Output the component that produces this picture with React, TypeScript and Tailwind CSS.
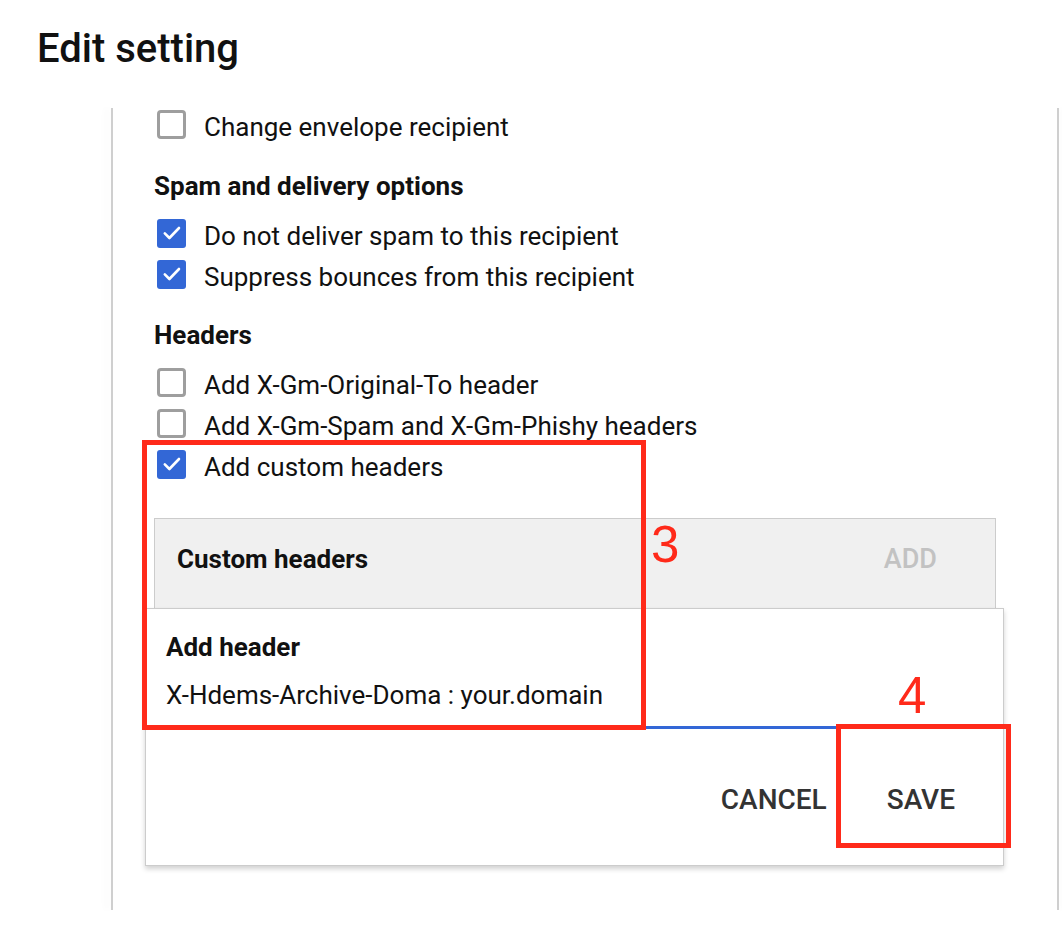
import React from "react";

function Box({ checked }: { checked: boolean }) {
  if (checked) {
    return (
      <div className="w-[29px] h-[29px] rounded-[3px] bg-[#3367d6] flex items-center justify-center shrink-0 mt-[-5px]">
        <svg width="24" height="24" viewBox="0 0 24 24" fill="none">
          <path d="M4.8 12.4l4.6 4.6 9.6-10" stroke="white" strokeWidth="2.6" strokeLinecap="round" strokeLinejoin="round" />
        </svg>
      </div>
    );
  }
  return <div className="w-[29px] h-[29px] rounded-[4px] border-[3px] border-[#9e9e9e] bg-white shrink-0 mt-[-5px]" />;
}

function Row({ checked, label }: { checked: boolean; label: string }) {
  return (
    <div className="h-[41px] flex items-center pl-[3px]">
      <Box checked={checked} />
      <span className="ml-[18px] text-[26px] leading-[30px] text-[#111]">{label}</span>
    </div>
  );
}

function Heading({ children, className }: { children: React.ReactNode; className: string }) {
  return <div className={"text-[26px] leading-[30px] font-bold text-[#111] " + className}>{children}</div>;
}

export default function App() {
  return (
    <div className="relative w-[1062px] h-[934px] bg-white overflow-hidden font-['Roboto',sans-serif]">
      <div className="pl-[37px] pt-[25px] text-[40px] leading-[48px] font-medium text-[#111]">Edit setting</div>
      <div className="mt-[35px] ml-[111px] w-[948px] h-[802px] flex">
        <div className="w-[2px] h-full bg-[#cfcfcf] shadow-[-5px_0_7px_rgba(0,0,0,0.05)]" />
        <div className="flex-1 pl-[41px] -mt-[2px]">
          <Row checked={false} label="Change envelope recipient" />
          <Heading className="mt-[24px]">Spam and delivery options</Heading>
          <div className="mt-[14px]">
            <Row checked={true} label="Do not deliver spam to this recipient" />
            <Row checked={true} label="Suppress bounces from this recipient" />
          </div>
          <Heading className="mt-[23px]">Headers</Heading>
          <div className="mt-[14px]">
            <Row checked={false} label="Add X-Gm-Original-To header" />
            <Row checked={false} label="Add X-Gm-Spam and X-Gm-Phishy headers" />
            <Row checked={true} label="Add custom headers" />
          </div>
          <div className="mt-[31px] w-[842px] h-[90px] bg-[#f0f0f0] border border-b-0 border-[#cccccc] flex items-start justify-between pl-[22px] pr-[58px] pt-[25px]">
            <span className="text-[26px] leading-[30px] font-bold text-[#111]">Custom headers</span>
            <span className="text-[27px] leading-[30px] font-medium text-[#c2c2c2]">ADD</span>
          </div>
          <div className="relative -ml-[9px] w-[859px] h-[258px] bg-white border border-[#cccccc] shadow-[0_3px_5px_rgba(0,0,0,0.18)] flex flex-col">
            <div className="pl-[20px] pt-[23px] text-[26px] leading-[30px] font-bold text-[#111]">Add header</div>
            <div className="ml-[20px] mr-[23px] mt-[18px] pb-[16px] border-b-[3px] border-[#3367d6] text-[26px] leading-[30px] text-[#111]">
              X-Hdems-Archive-Doma : your.domain
            </div>
            <div className="flex-1 flex items-center justify-end pr-[48px] gap-[60px] pt-[5px]">
              <span className="text-[28px] leading-[30px] font-medium text-[#333]">CANCEL</span>
              <span className="text-[28px] leading-[30px] font-medium text-[#333]">SAVE</span>
            </div>
          </div>
        </div>
        <div className="w-[2px] h-full bg-[#cfcfcf] shadow-[5px_0_7px_rgba(0,0,0,0.05)]" />
      </div>

      <div className="absolute left-[142px] top-[440px] w-[504px] h-[290px] border-[5px] border-[#ff2a1a]" />
      <div className="absolute left-[651px] top-[520px] text-[51px] leading-[50px] text-[#ff2a1a] font-['Liberation_Sans',Arial,sans-serif]">3</div>
      <div className="absolute left-[836px] top-[724px] w-[175px] h-[124px] border-[5px] border-[#ff2a1a]" />
      <div className="absolute left-[898px] top-[671px] text-[51px] leading-[50px] text-[#ff2a1a] font-['Liberation_Sans',Arial,sans-serif]">4</div>
    </div>
  );
}
